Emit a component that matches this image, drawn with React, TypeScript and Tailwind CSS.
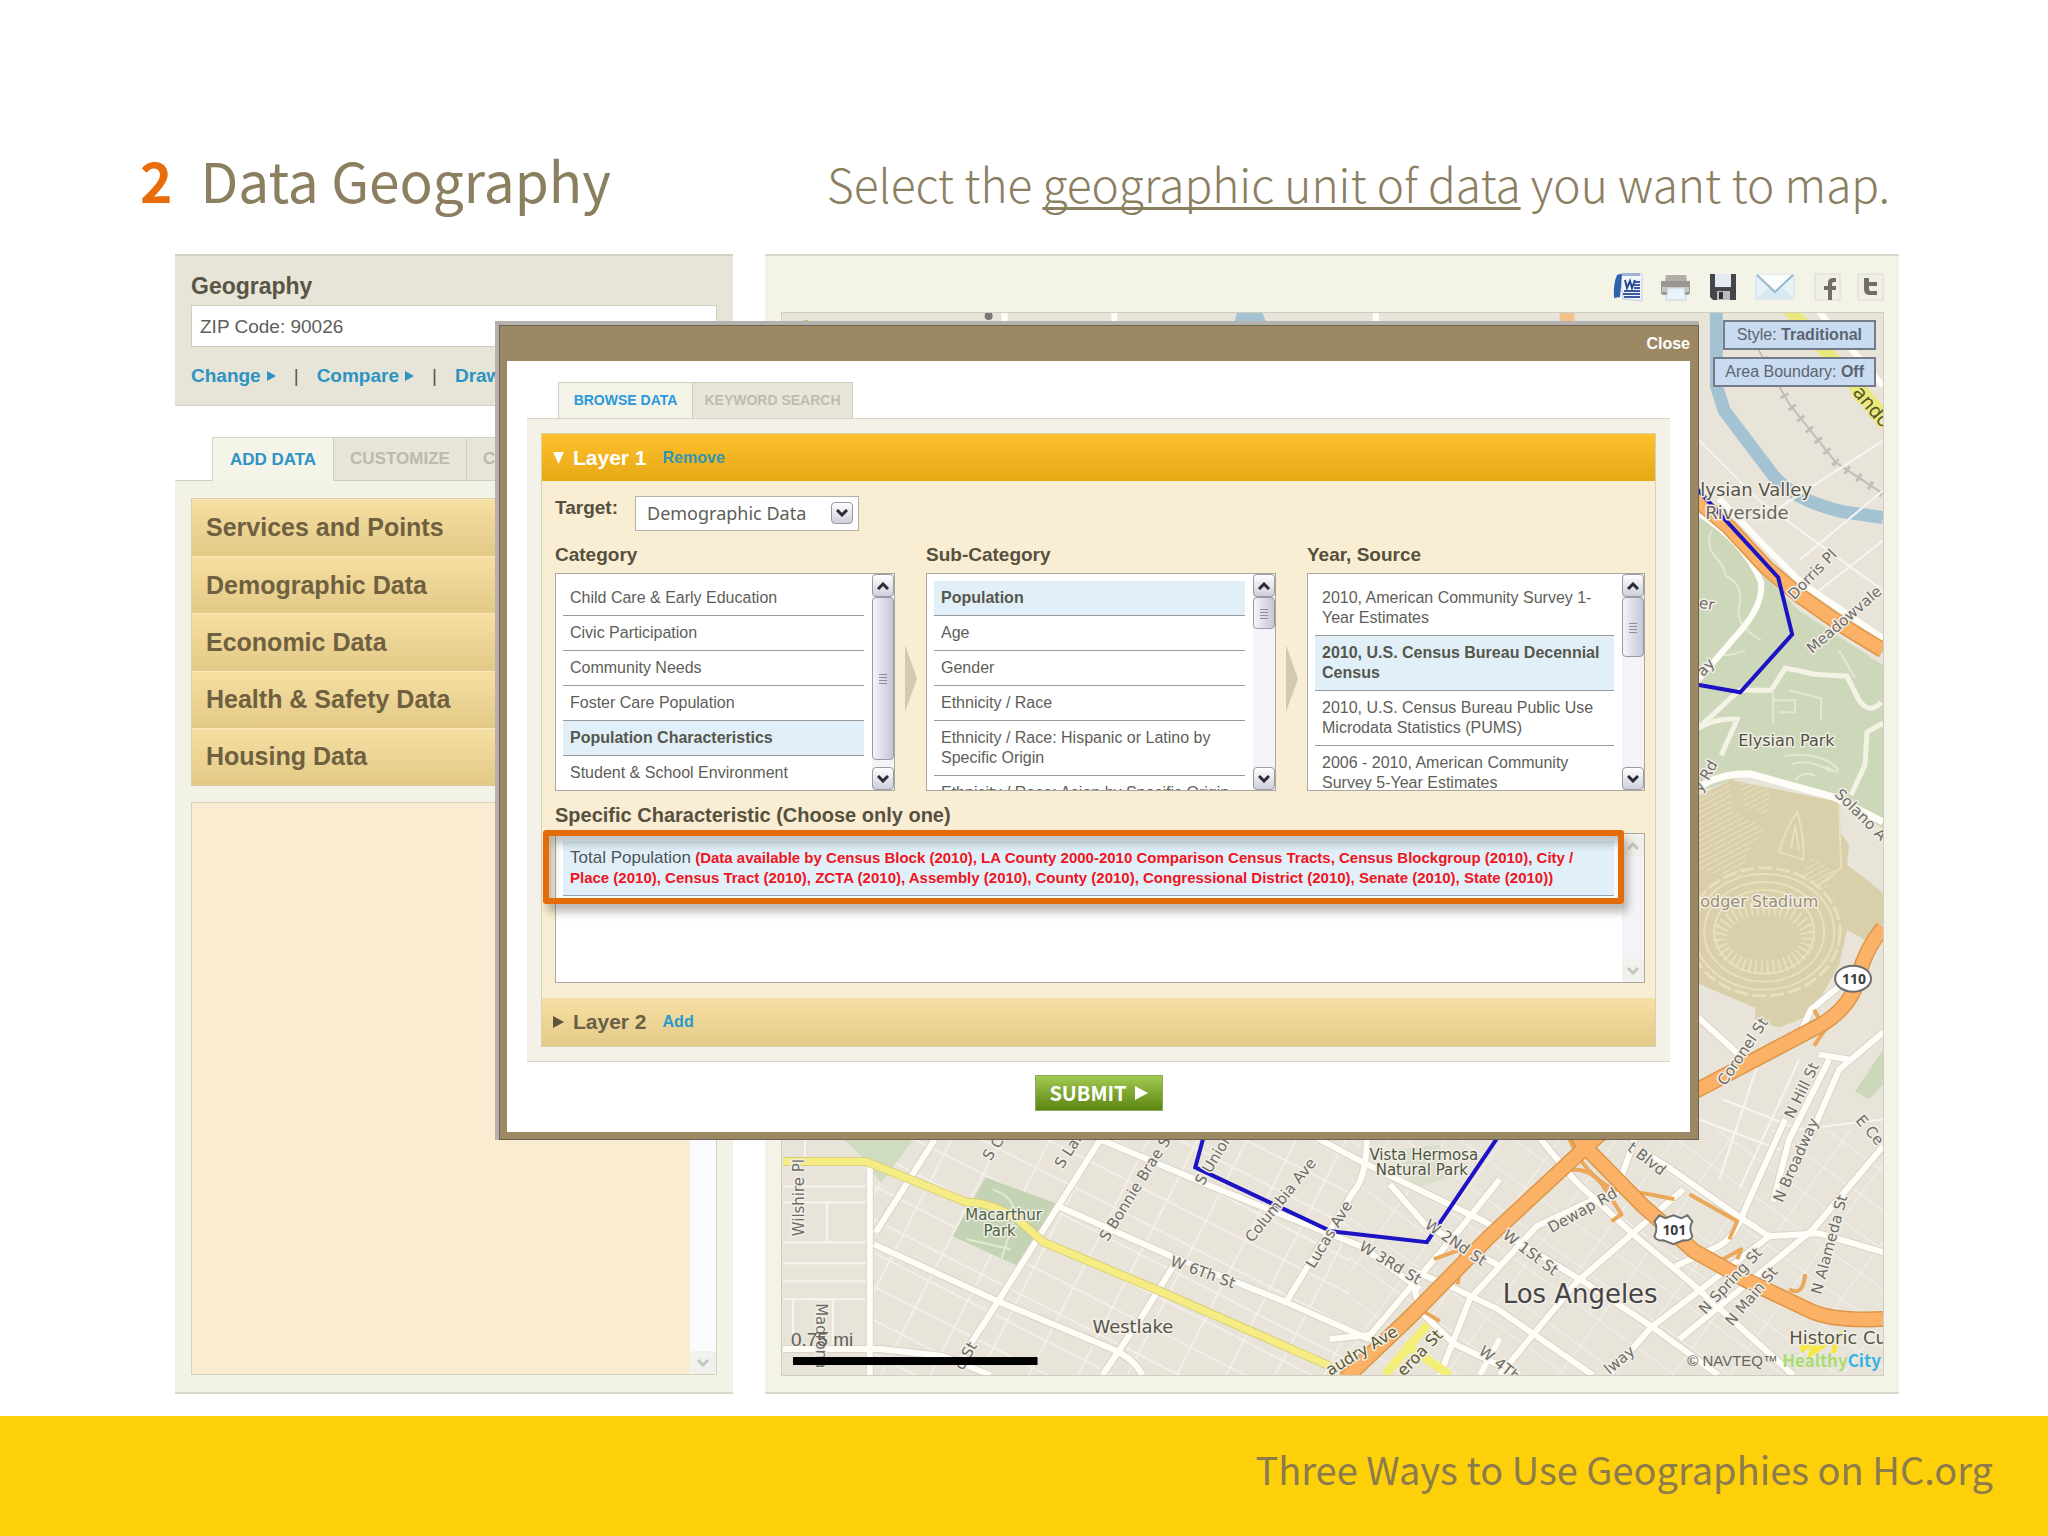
import { useState } from "react";

const categories = [
  "Child Care & Early Education",
  "Civic Participation",
  "Community Needs",
  "Foster Care Population",
  "Population Characteristics",
  "Student & School Environment",
];

const subCategories = [
  "Population",
  "Age",
  "Gender",
  "Ethnicity / Race",
  "Ethnicity / Race: Hispanic or Latino by Specific Origin",
  "Ethnicity / Race: Asian by Specific Origin",
];

const sources = [
  "2010, American Community Survey 1-Year Estimates",
  "2010, U.S. Census Bureau Decennial Census",
  "2010, U.S. Census Bureau Public Use Microdata Statistics (PUMS)",
  "2006 - 2010, American Community Survey 5-Year Estimates",
];

const dataGroups = [
  "Services and Points",
  "Demographic Data",
  "Economic Data",
  "Health & Safety Data",
  "Housing Data",
];

function Triangle({ className = "", down = false }: { className?: string; down?: boolean }) {
  return (
    <svg viewBox="0 0 10 10" className={className} preserveAspectRatio="none" aria-hidden="true">
      <path d={down ? "M0 0H10L5 10Z" : "M0 0L10 5L0 10Z"} fill="currentColor" />
    </svg>
  );
}

function ScrollArrow({ up = false, disabled = false }: { up?: boolean; disabled?: boolean }) {
  return (
    <button
      type="button"
      aria-label={up ? "Scroll up" : "Scroll down"}
      className={
        disabled
          ? "flex h-[23px] w-full shrink-0 items-center justify-center rounded-sm bg-[#f0f0ec] text-[#c4c4c0]"
          : "flex h-[23px] w-full shrink-0 items-center justify-center rounded-sm border border-[#9a9aa6] bg-linear-to-b from-white to-[#cfcfdc] text-[#2c2c34]"
      }
    >
      <svg viewBox="0 0 12 8" className="h-2 w-3" fill="none" stroke="currentColor" strokeWidth="3">
        <path d={up ? "M1 7L6 2L11 7" : "M1 1L6 6L11 1"} />
      </svg>
    </button>
  );
}

function Scrollbar({ thumb, disabled = false }: { thumb?: string; disabled?: boolean }) {
  return (
    <div className="flex w-[22px] shrink-0 flex-col justify-between bg-[#f4f4f8]">
      <div>
        <ScrollArrow up disabled={disabled} />
        {thumb && (
          <div
            className={`flex w-full items-center justify-center rounded-sm border border-[#9a9aa6] bg-linear-to-r from-[#f4f4fa] to-[#c6c6d6] ${thumb}`}
          >
            <svg viewBox="0 0 8 11" className="h-[11px] w-2" stroke="#8c8c9a">
              <path d="M0 1.5H8M0 4.5H8M0 7.5H8M0 10.5H8" />
            </svg>
          </div>
        )}
      </div>
      <ScrollArrow disabled={disabled} />
    </div>
  );
}

interface PickListProps {
  title: string;
  items: string[];
  selected: string;
  thumb: string;
  onSelect: (item: string) => void;
}

function PickList({ title, items, selected, thumb, onSelect }: PickListProps) {
  return (
    <div className="min-w-0">
      <h3 className="text-[19px] leading-7 font-bold text-[#56503f]">{title}</h3>
      <div className="mt-1 flex h-[218px] border border-[#aaa89c] bg-white">
        <ul className="min-w-0 flex-1 overflow-hidden pt-[7px] pr-2 pl-[7px]">
          {items.map((item) => (
            <li key={item} className="border-b border-[#9a9a98]">
              <button
                type="button"
                onClick={() => onSelect(item)}
                className={
                  item === selected
                    ? "w-full bg-[#e1f0f8] px-[7px] py-[7px] text-left text-[16px] leading-5 font-bold text-[#56564e]"
                    : "w-full py-[7px] pl-[7px] text-left text-[16px] leading-5 text-[#5e5e58]"
                }
              >
                {item}
              </button>
            </li>
          ))}
        </ul>
        <Scrollbar thumb={thumb} />
      </div>
    </div>
  );
}

const minorRoads = [
  "M804 1140V1162",
  "M782 1187H865M782 1203H865M782 1243H865M782 1264H865M782 1282H865M782 1300H865",
  "M792 1300V1350M832 1300V1350M826 1203V1243",
  "M1700 440L1760 500L1884 590M1760 520L1884 440M1800 560L1884 490M1820 590L1884 540",
  "M1724 1100L1800 1130L1884 1120M1760 1060L1720 1180M1800 1060L1740 1190M1700 1120L1780 1150",
];

const roads = [
  "M869 1165V1376",
  "M875 1233L934 1140",
  "M1100 1140L997 1303L962 1357",
  "M873 1245L997 1302L1112 1350Q1134 1360 1142 1376",
  "M1060 1208L1171 1257L1286 1303L1369 1340",
  "M1100 1140L1211 1187L1273 1212L1361 1247L1420 1290",
  "M1173 1267L1140 1320L1102 1376",
  "M1286 1303L1306 1270L1353 1193Q1366 1180 1367 1140",
  "M782 1350H879L942 1357L990 1376",
  "M1310 1135L1363 1163L1486 1223L1585 1283L1656 1330L1719 1376",
  "M1390 1185L1425 1225L1500 1267",
  "M1541 1140L1577 1183L1636 1237L1691 1283L1794 1376",
  "M1640 1150L1672 1170L1739 1217L1770 1237L1820 1234L1884 1253",
  "M1786 1120L1747 1207Q1735 1240 1719 1247L1676 1267",
  "M1774 1202L1790 1140L1830 1060M1770 1237L1715 1280L1652 1328L1610 1376",
  "M1684 1190L1577 1283L1500 1376",
  "M1616 1190L1537 1227L1470 1300L1440 1376",
  "M1410 1270L1450 1287L1498 1310L1593 1376",
  "M1410 1270L1420 1312L1455 1345L1520 1376",
  "M1884 1147L1814 1230L1774 1263L1680 1340",
  "M1330 1340L1370 1336L1460 1230L1500 1180",
  "M1884 1033L1840 1070L1810 1140M1820 1055L1850 1060",
  "M1699 1018L1745 1060M1775 1045L1800 1035L1812 1010L1860 970",
  "M1635 1140L1616 1195M1380 1340L1369 1340",
];

interface MapLabel {
  text: string;
  x: number;
  y: number;
  angle?: number;
  size?: number;
  color?: string;
  middle?: boolean;
}

const mapLabels: MapLabel[] = [
  { text: "lysian Valley", x: 1701, y: 495, size: 18, color: "#55554f" },
  { text: "Riverside", x: 1706, y: 518, size: 18, color: "#66665f" },
  { text: "Dorris Pl", x: 1795, y: 600, angle: -46 },
  { text: "Meadowvale", x: 1813, y: 654, angle: -41 },
  { text: "Elysian Park", x: 1739, y: 746, size: 16, color: "#4c5344" },
  { text: "odger Stadium", x: 1701, y: 907, size: 16, color: "#9c8f72" },
  { text: "Solano A", x: 1835, y: 795, angle: 45 },
  { text: "er", x: 1699, y: 607, angle: 10 },
  { text: "ay", x: 1704, y: 677, angle: -48 },
  { text: "y Rd", x: 1702, y: 793, angle: -60 },
  { text: "Coronel St", x: 1726, y: 1087, angle: -56 },
  { text: "N Hill St", x: 1794, y: 1120, angle: -64 },
  { text: "N Broadway", x: 1783, y: 1204, angle: -66 },
  { text: "E Ce", x: 1856, y: 1121, angle: 50 },
  { text: "N Alameda St", x: 1822, y: 1296, angle: -75 },
  { text: "N Spring St", x: 1706, y: 1316, angle: -47 },
  { text: "N Main St", x: 1733, y: 1328, angle: -50 },
  { text: "Dewap Rd", x: 1552, y: 1234, angle: -29 },
  { text: "t Blvd", x: 1627, y: 1150, angle: 38 },
  { text: "W 1St St", x: 1502, y: 1238, angle: 37 },
  { text: "W 2Nd St", x: 1424, y: 1228, angle: 34 },
  { text: "W 3Rd St", x: 1358, y: 1250, angle: 31 },
  { text: "W 4Th St", x: 1478, y: 1354, angle: 38 },
  { text: "Lucas Ave", x: 1314, y: 1270, angle: -59 },
  { text: "Columbia Ave", x: 1252, y: 1244, angle: -51 },
  { text: "S Bonnie Brae St", x: 1107, y: 1243, angle: -58 },
  { text: "S Union Ave", x: 1203, y: 1187, angle: -59 },
  { text: "S Lake St", x: 1062, y: 1170, angle: -57 },
  { text: "S Coronado", x: 990, y: 1162, angle: -57 },
  { text: "W 6Th St", x: 1169, y: 1266, angle: 20 },
  { text: "Wilshire Pl", x: 803, y: 1237, angle: -90 },
  { text: "Madrona", x: 815, y: 1304, angle: 90 },
  { text: "o St", x: 962, y: 1372, angle: -60 },
  { text: "lway", x: 1610, y: 1376, angle: -40 },
  { text: "audry Ave", x: 1330, y: 1377, size: 16, angle: -31, color: "#5a5a34" },
  { text: "eroa St", x: 1404, y: 1378, size: 16, angle: -46, color: "#5a5a34" },
  { text: "Macarthur", x: 1003, y: 1221, size: 15, color: "#4a6344", middle: true },
  { text: "Park", x: 999, y: 1237, size: 15, color: "#4a6344", middle: true },
  { text: "Vista Hermosa", x: 1424, y: 1161, size: 15, color: "#4a5544", middle: true },
  { text: "Natural Park", x: 1422, y: 1176, size: 15, color: "#4a5544", middle: true },
  { text: "Westlake", x: 1092, y: 1334, size: 18, color: "#55554f" },
  { text: "Los Angeles", x: 1503, y: 1304, size: 26, color: "#44444a" },
  { text: "Historic Cu", x: 1790, y: 1345, size: 18, color: "#55554f" },
];

function StreetMap() {
  return (
    <svg
      viewBox="781 311 1103 1065"
      preserveAspectRatio="xMaxYMax slice"
      className="h-full w-full"
      role="img"
      aria-label="Street map of Los Angeles around ZIP code 90026"
    >
      <defs>
        <pattern id="blocksWest" width="44" height="30" patternUnits="userSpaceOnUse" patternTransform="rotate(27)">
          <path d="M0 0H44M0 0V30" stroke="#f6f2ec" strokeWidth="3" fill="none" />
        </pattern>
        <pattern id="blocksEast" width="46" height="32" patternUnits="userSpaceOnUse" patternTransform="rotate(36)">
          <path d="M0 0H46M0 0V32" stroke="#f4f0e9" strokeWidth="2" fill="none" />
        </pattern>
        <pattern id="parking" width="5" height="5" patternUnits="userSpaceOnUse" patternTransform="rotate(62)">
          <path d="M0 0V5" stroke="#e9e2bd" strokeWidth="2" />
        </pattern>
      </defs>

      <rect x="781" y="311" width="1103" height="1065" fill="#e9e4da" />
      <path d="M866 1130H1350V1376H866Z" fill="url(#blocksWest)" />
      <path d="M1350 1130H1884V1376H1350Z" fill="url(#blocksEast)" />

      {/* river and rail */}
      <path d="M1717 305V385L1725 410L1753 447L1775 476Q1796 500 1843 511L1884 517" fill="none" stroke="#a3c3d2" strokeWidth="13" />
      <path d="M1233 326L1237 311H1262L1268 326Z" fill="#a3c3d2" />
      <path d="M1757 345L1790 403L1817 437L1837 462L1884 493" fill="none" stroke="#c2beb8" strokeWidth="2" />
      <path d="M1757 345L1790 403L1817 437L1837 462L1884 493" fill="none" stroke="#c2beb8" strokeWidth="9" strokeDasharray="3 11" />

      {/* parks */}
      <path d="M1690 500L1740 548L1775 585L1800 610L1884 665V828L1835 800L1750 774L1690 795Z" fill="#cdd8bb" />
      <path d="M841 1138H914L880 1184L862 1158Z" fill="#cfdcc0" />
      <path d="M985 1178L1055 1204L1018 1267L952 1237Z" fill="#c3d3b4" />
      <path d="M1398 1150L1440 1145L1450 1178L1412 1190Z" fill="#d9dfca" />
      <path d="M1884 1050L1856 1092L1870 1100L1884 1085Z" fill="#cdd8bb" />
      <g fill="none" stroke="#e2e8d2" strokeWidth="2">
        <path d="M1712 530Q1706 545 1716 556T1726 575Q1745 585 1740 605T1762 640" />
        <path d="M1774 692V724M1774 700H1796V712H1780M1790 690L1822 698V720M1784 756Q1820 750 1838 768Q1842 776 1826 766M1792 764Q1812 758 1832 772M1796 780Q1804 770 1816 776" />
        <path d="M1720 655Q1735 655 1746 650M1840 650L1856 678" />
        <path d="M992 1190Q1020 1200 1012 1225T1000 1262M966 1240L1010 1250" />
      </g>
      <g fill="none" stroke="#f4f2e4" strokeWidth="5">
        <path d="M1699 728L1740 690H1772L1786 668Q1800 670 1815 674L1848 676L1860 700Q1870 715 1882 702" />
        <path d="M1699 728Q1715 718 1738 719L1722 755" />
        <path d="M1884 723L1868 732L1866 765L1852 795" />
      </g>

      {/* stadium */}
      <path
        d="M1690 800L1732 780L1840 802V830L1850 845L1848 865L1868 880L1884 893V925L1866 940L1848 930L1840 965L1812 1015L1780 1028L1756 1020V1008L1690 980Z"
        fill="#d9cfaa"
      />
      <path d="M1699 800L1730 785L1734 812L1766 828L1748 852L1742 878L1699 870ZM1742 783L1770 788V815L1745 808ZM1812 858L1838 872L1828 888L1800 880Z" fill="url(#parking)" />
      <g fill="none" stroke="#e8e0bb" strokeWidth="2">
        <ellipse cx="1765" cy="932" rx="70" ry="58" />
        <ellipse cx="1765" cy="932" rx="60" ry="50" />
        <ellipse cx="1765" cy="932" rx="50" ry="42" />
        <path d="M1798 812Q1786 830 1780 852L1804 860Q1806 840 1798 812ZM1792 848L1796 825L1800 850M1840 802L1842 868L1820 885" />
      </g>
      <ellipse cx="1765" cy="932" rx="76" ry="64" fill="none" stroke="#e8e0bb" strokeWidth="3" strokeDasharray="14 4" />
      <ellipse cx="1765" cy="938" rx="44" ry="30" fill="none" stroke="#e8e0bb" strokeWidth="14" strokeDasharray="2 4" />

      {/* streets */}
      <g fill="none" stroke="#f8f5ef" strokeWidth="2">
        {minorRoads.map((d) => (
          <path key={d} d={d} />
        ))}
      </g>
      <g fill="none" stroke="#d9d3c8" strokeWidth="8" strokeLinejoin="round">
        {roads.map((d) => (
          <path key={d} d={d} />
        ))}
      </g>
      <g fill="none" stroke="#fffdf8" strokeWidth="6" strokeLinejoin="round">
        {roads.map((d) => (
          <path key={d} d={d} />
        ))}
        <path d="M1695 510Q1745 540 1762 582Q1764 605 1740 632L1695 684" />
        <path d="M1695 790Q1720 772 1752 774L1835 797L1884 822" strokeWidth="7" />
        <path d="M1720 498L1765 545L1802 582L1884 638" />
        <path d="M1820 311L1884 385" />
        <path d="M1004 311V326M1114 311V326M1376 311V326" />
      </g>
      <path d="M1790 308L1835 360L1884 415" fill="none" stroke="#ebe97c" strokeWidth="14" />
      <path d="M782 1162H865L966 1203Q990 1203 1017 1220L1043 1243L1155 1290L1330 1367" fill="none" stroke="#d8cf78" strokeWidth="9" />
      <path d="M782 1162H865L966 1203Q990 1203 1017 1220L1043 1243L1155 1290L1330 1367" fill="none" stroke="#f6ec84" strokeWidth="7" />
      <path d="M1385 1376L1428 1325M1405 1345L1450 1376" fill="none" stroke="#f3ee78" strokeWidth="9" />
      <path d="M1480 1376L1500 1340" fill="none" stroke="#fffdf8" strokeWidth="5" />

      {/* freeways */}
      <g fill="none" strokeLinejoin="round">
        <g stroke="#eba85a" strokeWidth="4">
          <path d="M1570 1140Q1585 1175 1614 1190L1650 1195L1675 1200M1566 1172Q1590 1165 1606 1190L1622 1215L1612 1222" />
          <path d="M1690 1195L1738 1222L1730 1240M1720 1262L1742 1250L1738 1260M1790 1290Q1804 1298 1806 1275" />
          <path d="M1434 1260L1462 1250L1458 1285M1420 1310L1440 1322M1815 1010L1826 1030L1815 1046" />
        </g>
        <g stroke="#dd9648" strokeWidth="16">
          <path d="M1690 493L1730 527L1767 567L1800 595L1843 625L1884 650" />
          <path d="M1884 928Q1866 950 1860 975Q1854 1005 1824 1024L1699 1090L1600 1135L1490 1237L1411 1317L1345 1380" />
          <path d="M1560 1110L1585 1147L1644 1207L1695 1252L1747 1281L1814 1313Q1836 1322 1884 1320" />
        </g>
        <g stroke="#fbb266" strokeWidth="13">
          <path d="M1690 493L1730 527L1767 567L1800 595L1843 625L1884 650" />
          <path d="M1884 928Q1866 950 1860 975Q1854 1005 1824 1024L1699 1090L1600 1135L1490 1237L1411 1317L1345 1380" />
          <path d="M1560 1110L1585 1147L1644 1207L1695 1252L1747 1281L1814 1313Q1836 1322 1884 1320" />
        </g>
      </g>
      <path d="M1560 311H1575V326H1560Z" fill="#f3b878" opacity="0.8" />
      <path d="M795 326Q805 312 815 326Z" fill="#a9c84a" />
      <circle cx="988" cy="315" r="4" fill="#77777a" />
      <path d="M1800 1336L1804 1350L1816 1340L1812 1354L1840 1336L1834 1354" fill="none" stroke="#f4ea3c" strokeWidth="5" />

      {/* ZIP code boundary */}
      <path d="M1690 480L1779 577L1793 634L1741 692L1690 683" fill="none" stroke="#1c14c4" strokeWidth="4" />
      <path d="M1204 1135L1195 1168L1331 1232L1427 1243L1500 1135" fill="none" stroke="#1c14c4" strokeWidth="4" />

      <g className="font-['DejaVu_Sans',sans-serif]" stroke="#f3eee4" strokeWidth="3" paintOrder="stroke" strokeLinejoin="round">
        {mapLabels.map(({ text, x, y, angle = 0, size = 15, color = "#6c6c6c", middle }) => (
          <text
            key={text}
            transform={`translate(${x} ${y}) rotate(${angle})`}
            fontSize={size}
            fill={color}
            textAnchor={middle ? "middle" : "start"}
          >
            {text}
          </text>
        ))}
        <text transform="translate(1853 392) rotate(50)" fontSize="19" fill="#55552c" stroke="#ebe97c">
          ando
        </text>
      </g>

      <ellipse cx="1854" cy="979" rx="18" ry="13" fill="#fff" stroke="#6e6e6e" strokeWidth="2" />
      <path
        d="M1660 1216L1666 1219L1674 1216L1682 1219L1688 1216L1693 1222Q1689 1229 1693 1237Q1691 1242 1684 1241L1674 1245L1664 1241Q1657 1242 1655 1237Q1659 1229 1655 1222Z"
        fill="#fff"
        stroke="#6e6e6e"
        strokeWidth="2"
      />
      <g className="font-['Noto_Sans',sans-serif]" fontSize="14" fontWeight="700" fill="#3c3c3c" textAnchor="middle">
        <text x="1855" y="984">110</text>
        <text x="1675" y="1236">101</text>
      </g>

      <g className="font-['Liberation_Sans',sans-serif]">
        <text x="790" y="1347" fontSize="19" fill="#5e5e58">0.75 mi</text>
        <text x="1688" y="1367" fontSize="15" fill="#66665f">© NAVTEQ™</text>
      </g>
      <text x="1783" y="1368" fontSize="17" fontWeight="700" className="font-['Noto_Sans_CJK_SC',sans-serif]">
        <tspan fill="#a9dc74">Healthy</tspan>
        <tspan fill="#36b4e4">City</tspan>
      </text>
      <rect x="792" y="1358" width="245" height="8" fill="#000" />
    </svg>
  );
}

function Toolbar() {
  return (
    <div className="flex h-[56px] items-center justify-end pt-[5px]">
      <button type="button" aria-label="Export to Word" className="mr-4">
        <svg viewBox="0 0 31 30" className="h-[30px] w-[31px]">
          <path d="M7 2H29V29L10 27Z" fill="#f2f5fb" stroke="#c3cde0" />
          <path d="M9 1H27V4H8Z" fill="#9fb2d6" />
          <path d="M4 3Q9 1 9 3L7 25L1 26Q0 12 4 3Z" fill="#2f62ac" />
          <path d="M12 8L14 16L17 9L19 16L22 8" fill="none" stroke="#2a4a90" strokeWidth="2" />
          <path d="M20 10H27M21 13H27M21 16H27M11 19H27M10 22H27M11 25H27" stroke="#3a5aa4" strokeWidth="2" />
        </svg>
      </button>
      <button type="button" aria-label="Print" className="mr-[18px]">
        <svg viewBox="0 0 31 30" className="h-[30px] w-[31px]">
          <path d="M6 3H26L27 9H5Z" fill="#b3ada6" />
          <path d="M1 9H30V20Q30 23 27 23H4Q1 23 1 20Z" fill="#9a9692" />
          <path d="M2 15H29V20H2Z" fill="#c9c5c0" />
          <path d="M8 16H24L26 28H6Z" fill="#e9f3fa" stroke="#c4d6e2" />
        </svg>
      </button>
      <button type="button" aria-label="Save" className="mr-[18px]">
        <svg viewBox="0 0 28 30" className="h-[30px] w-7">
          <path d="M1 2H27V28H4L1 25Z" fill="#45454a" />
          <path d="M6 2H22V15H6Z" fill="#e3ebf2" />
          <path d="M8 19H21V28H8Z" fill="#b9bbbe" />
          <path d="M10 20H14V27H10Z" fill="#333338" />
        </svg>
      </button>
      <button type="button" aria-label="Email" className="mr-[18px]">
        <svg viewBox="0 0 41 28" className="h-7 w-[41px]">
          <path d="M1 2H39V26H1Z" fill="#e6f1f8" stroke="#ccdfea" />
          <path d="M1 26L15 13L20 18L26 13L39 26Z" fill="#d9e9f3" />
          <path d="M2 2L20 19L38 2" fill="#fbfdff" stroke="#98b8cc" strokeWidth="2" />
        </svg>
      </button>
      <a href="#facebook" aria-label="Facebook" className="mr-4">
        <svg viewBox="0 0 27 28" className="h-7 w-[27px]">
          <rect x="1" y="1" width="25" height="26" fill="#f1f0e8" stroke="#dcdad0" />
          <path d="M14 27V17H10V13H14V10Q14 5 19 5H22V9H20Q18 9 18 11V13H22V17H18V27Z" fill="#716d68" />
        </svg>
      </a>
      <a href="#twitter" aria-label="Twitter">
        <svg viewBox="0 0 27 28" className="h-7 w-[27px]">
          <rect x="1" y="1" width="25" height="26" fill="#f1f0e8" stroke="#dcdad0" />
          <path d="M7 5H12V9H20V13H12V16Q12 18 14 18H20V22H13Q7 22 7 16Z" fill="#716d68" />
        </svg>
      </a>
    </div>
  );
}

function GeographyPanel() {
  return (
    <section className="h-[152px] border-t-2 border-b border-[#d2d2c4] bg-[#e6e5d8] px-4 pt-[11px]">
      <label htmlFor="geography" className="block text-[23px] leading-[38px] font-bold text-[#5a5444]">
        Geography
      </label>
      <input
        id="geography"
        defaultValue="ZIP Code: 90026"
        className="block h-[42px] w-full border border-[#cfcebf] bg-white px-2 pt-[2px] text-[19px] text-[#5e5e5a] outline-none"
      />
      <div className="mt-4 flex items-center text-[19px] leading-[26px] font-bold text-[#2c93c4]">
        <a href="#change" className="flex items-center gap-[6px]">
          Change <Triangle className="h-[10px] w-[9px]" />
        </a>
        <span className="px-[18px] font-normal text-[#55554f]">|</span>
        <a href="#compare" className="flex items-center gap-[6px]">
          Compare <Triangle className="h-[10px] w-[9px]" />
        </a>
        <span className="px-[18px] font-normal text-[#55554f]">|</span>
        <a href="#draw">Draw</a>
      </div>
    </section>
  );
}

function Sidebar() {
  return (
    <aside className="flex w-[558px] shrink-0 flex-col">
      <GeographyPanel />
      <div className="mt-[31px] flex h-[44px] items-stretch text-[17px] font-bold">
        <div className="w-[37px] border-b border-[#d2d2c4]" />
        <button type="button" className="w-[121px] border-t border-l border-[#d2d2c4] bg-[#f4f4e8] text-[#2c93c4]">
          ADD DATA
        </button>
        <button type="button" className="w-[134px] border border-[#cfcfc2] bg-[#e6e5d8] text-[#bdbaac]">
          CUSTOMIZE
        </button>
        <button type="button" className="w-[120px] border-y border-r border-[#cfcfc2] bg-[#e6e5d8] pl-4 text-left text-[#bdbaac]">
          C
        </button>
        <div className="flex-1 border-b border-[#d2d2c4]" />
      </div>
      <div className="flex flex-1 flex-col gap-4 border-b-2 border-[#d8d8cc] bg-[#f3f2e7] px-4 pt-[17px] pb-[17px]">
        <ul className="flex h-[288px] flex-col border border-[#d8cda4]">
          {dataGroups.map((group) => (
            <li key={group} className="flex-1">
              <button
                type="button"
                className="h-full w-full border-t border-[#fae9b8] bg-linear-to-b from-[#f6dfa2] to-[#e2c987] pl-[14px] text-left text-[25px] font-bold text-[#6f6040]"
              >
                {group}
              </button>
            </li>
          ))}
        </ul>
        <div className="flex flex-1 justify-end border border-[#d6d3bd] bg-[#f9ecd0]">
          <div className="flex w-[26px] flex-col bg-[#fbfafc]">
            <div className="flex-1" />
            <ScrollArrow disabled />
          </div>
        </div>
      </div>
    </aside>
  );
}

function MapPanel() {
  return (
    <section className="flex min-w-0 flex-1 flex-col border-t-2 border-b-2 border-[#d8d8cc] bg-[#f4f3e8] pr-[15px] pb-4 pl-4">
      <Toolbar />
      <div className="relative min-h-0 flex-1 border border-[#cfccc0]">
        <div className="absolute inset-0">
          <StreetMap />
        </div>
        <div className="absolute top-[7px] right-[7px] flex flex-col items-end gap-[7px] text-[16px] text-[#5c6470]">
          <button type="button" className="h-[30px] border-2 border-[#747c8c] bg-[#c9dbf0] px-3">
            Style: <b>Traditional</b>
          </button>
          <button type="button" className="h-[30px] border-2 border-[#747c8c] bg-[#c9dbf0] px-[10px]">
            Area Boundary: <b>Off</b>
          </button>
        </div>
      </div>
    </section>
  );
}

function FlowArrow() {
  return (
    <div className="flex items-center justify-center pt-6">
      <Triangle className="h-[67px] w-3 text-[#d2c9b0]" />
    </div>
  );
}

function DataDialog() {
  const [category, setCategory] = useState("Population Characteristics");
  const [subCategory, setSubCategory] = useState("Population");
  const [source, setSource] = useState("2010, U.S. Census Bureau Decennial Census");

  return (
    <div
      role="dialog"
      aria-label="Add data"
      className="absolute top-[67px] right-[349px] left-[495px] border-t-4 border-l-4 border-[#b4b1ae]"
    >
      <div className="border border-[#6c6250] bg-[#9c8963] pr-2 pb-[7px] pl-[7px]">
        <div className="flex h-[35px] items-center justify-end">
          <button type="button" className="text-[16px] font-bold text-white">
            Close
          </button>
        </div>

        <div className="bg-white px-5 pt-[21px] pb-[21px]">
          <div className="flex h-9 items-stretch text-[14px] font-bold">
            <div className="w-[31px]" />
            <button type="button" className="w-[134px] border-t border-l border-[#d0cfbe] bg-[#f4f3e8] text-[#2a98dc]">
              BROWSE DATA
            </button>
            <button type="button" className="w-[161px] border-x border-t border-[#cfcebd] bg-[#e8e6d8] text-[#bfbcab]">
              KEYWORD SEARCH
            </button>
          </div>

          <div className="border-y border-[#d6d5c6] bg-[#f4f2e8] p-[14px]">
            <div className="border border-[#d8d2b4] bg-[#f9edd3]">
              <div className="flex h-[47px] items-center bg-linear-to-b from-[#fec02c] to-[#e6a813] pl-[11px]">
                <Triangle down className="h-3 w-[11px] text-white" />
                <h2 className="ml-[9px] text-[21px] font-bold text-white">Layer 1</h2>
                <a href="#remove" className="ml-4 text-[16px] font-bold text-[#2f96b0]">
                  Remove
                </a>
              </div>

              <div className="pt-[15px] pr-[10px] pb-[15px] pl-[13px]">
                <div className="flex items-start">
                  <label htmlFor="target" className="w-[80px] text-[19px] leading-[23px] font-bold text-[#56503f]">
                    Target:
                  </label>
                  <div className="relative">
                    <select
                      id="target"
                      className="h-[35px] w-[224px] appearance-none border border-[#b4b1a0] bg-white pl-[11px] font-['Noto_Sans',sans-serif] text-[18px] text-[#5e5e58] outline-none"
                    >
                      <option>Demographic Data</option>
                    </select>
                    <span className="pointer-events-none absolute top-[6px] right-[6px] flex h-[22px] w-[22px] items-center justify-center rounded-sm border border-[#9a9aa6] bg-linear-to-b from-white to-[#cfcfdc]">
                      <svg viewBox="0 0 12 8" className="h-2 w-3" fill="none" stroke="#2c2c34" strokeWidth="3">
                        <path d="M1 1L6 6L11 1" />
                      </svg>
                    </span>
                  </div>
                </div>

                <div className="mt-[10px] grid grid-cols-[340fr_31px_350fr_31px_338fr]">
                  <PickList title="Category" items={categories} selected={category} thumb="h-[163px]" onSelect={setCategory} />
                  <FlowArrow />
                  <PickList title="Sub-Category" items={subCategories} selected={subCategory} thumb="h-8" onSelect={setSubCategory} />
                  <FlowArrow />
                  <PickList title="Year, Source" items={sources} selected={source} thumb="h-[60px]" onSelect={setSource} />
                </div>

                <h3 className="mt-[10px] text-[20px] leading-7 font-bold text-[#56503f]">
                  Specific Characteristic (Choose only one)
                </h3>
                <div className="relative mt-1 flex h-[150px] border border-[#aaa89c] bg-white">
                  <div className="min-w-0 flex-1 pt-[7px] pr-2 pl-[7px]">
                    <button
                      type="button"
                      className="w-full border-b border-[#8fa0b8] bg-[#e1f0f8] px-[7px] pt-[7px] pb-[7px] text-left text-[15px] leading-5 font-bold whitespace-nowrap text-[#f0141e]"
                    >
                      <span className="text-[17px] font-normal text-[#4e5458]">Total Population</span> (Data available by
                      Census Block (2010), LA County 2000-2010 Comparison Census Tracts, Census Blockgroup (2010), City /
                      <br />
                      Place (2010), Census Tract (2010), ZCTA (2010), Assembly (2010), County (2010), Congressional District
                      (2010), Senate (2010), State (2010))
                    </button>
                  </div>
                  <Scrollbar disabled />
                  <div className="pointer-events-none absolute -top-1 right-5 -left-[13px] h-[74px] rounded-[3px] border-[6px] border-[#e36c0a] shadow-[4px_8px_8px_rgba(90,80,70,0.4),inset_4px_8px_8px_rgba(70,80,90,0.35)]" />
                </div>
              </div>

              <div className="flex h-12 items-center bg-linear-to-b from-[#f7e0a4] to-[#e3ca88] pl-[11px]">
                <Triangle className="h-3 w-[11px] text-[#5c543c]" />
                <h2 className="ml-[9px] text-[21px] font-bold text-[#6a6048]">Layer 2</h2>
                <a href="#add" className="ml-4 text-[16px] font-bold text-[#2a98cc]">
                  Add
                </a>
              </div>
            </div>
          </div>

          <div className="mt-[13px] flex justify-center">
            <button
              type="button"
              className="flex h-9 w-[128px] items-center justify-center gap-2 border border-[#8aa860] bg-linear-to-b from-[#a3ca50] to-[#5c860a] font-['Noto_Sans_CJK_SC',sans-serif] text-[20px] leading-none font-bold text-white"
            >
              SUBMIT <Triangle className="h-[14px] w-[13px]" />
            </button>
          </div>
        </div>
      </div>
    </div>
  );
}

export default function App() {
  return (
    <div className="flex min-h-screen flex-col bg-white font-['Liberation_Sans',Arial,sans-serif]">
      <header className="flex h-[254px] items-baseline pt-[144px] pl-[140px] font-['Noto_Sans_CJK_SC',sans-serif] text-[#8c7f5f]">
        <h1 className="w-[687px] text-[55px] leading-[70px]">
          <span className="mr-7 font-bold text-[#e86c0a]">2</span>
          Data Geography
        </h1>
        <p className="text-[46px] leading-[70px] font-light whitespace-nowrap">
          Select the <span className="underline decoration-3 underline-offset-4 [text-decoration-skip-ink:none]">geographic unit of data</span> you want to map.
        </p>
      </header>

      <main className="relative flex flex-1 gap-8 pr-[149px] pl-[175px]">
        <Sidebar />
        <MapPanel />
        <DataDialog />
      </main>

      <footer className="mt-[22px] flex h-[120px] items-center justify-end bg-[#fdd00a] pr-[55px] pb-4 font-['Noto_Sans_CJK_SC',sans-serif] text-[38px] text-[#8c7c4c]">
        Three Ways to Use Geographies on HC.org
      </footer>
    </div>
  );
}
